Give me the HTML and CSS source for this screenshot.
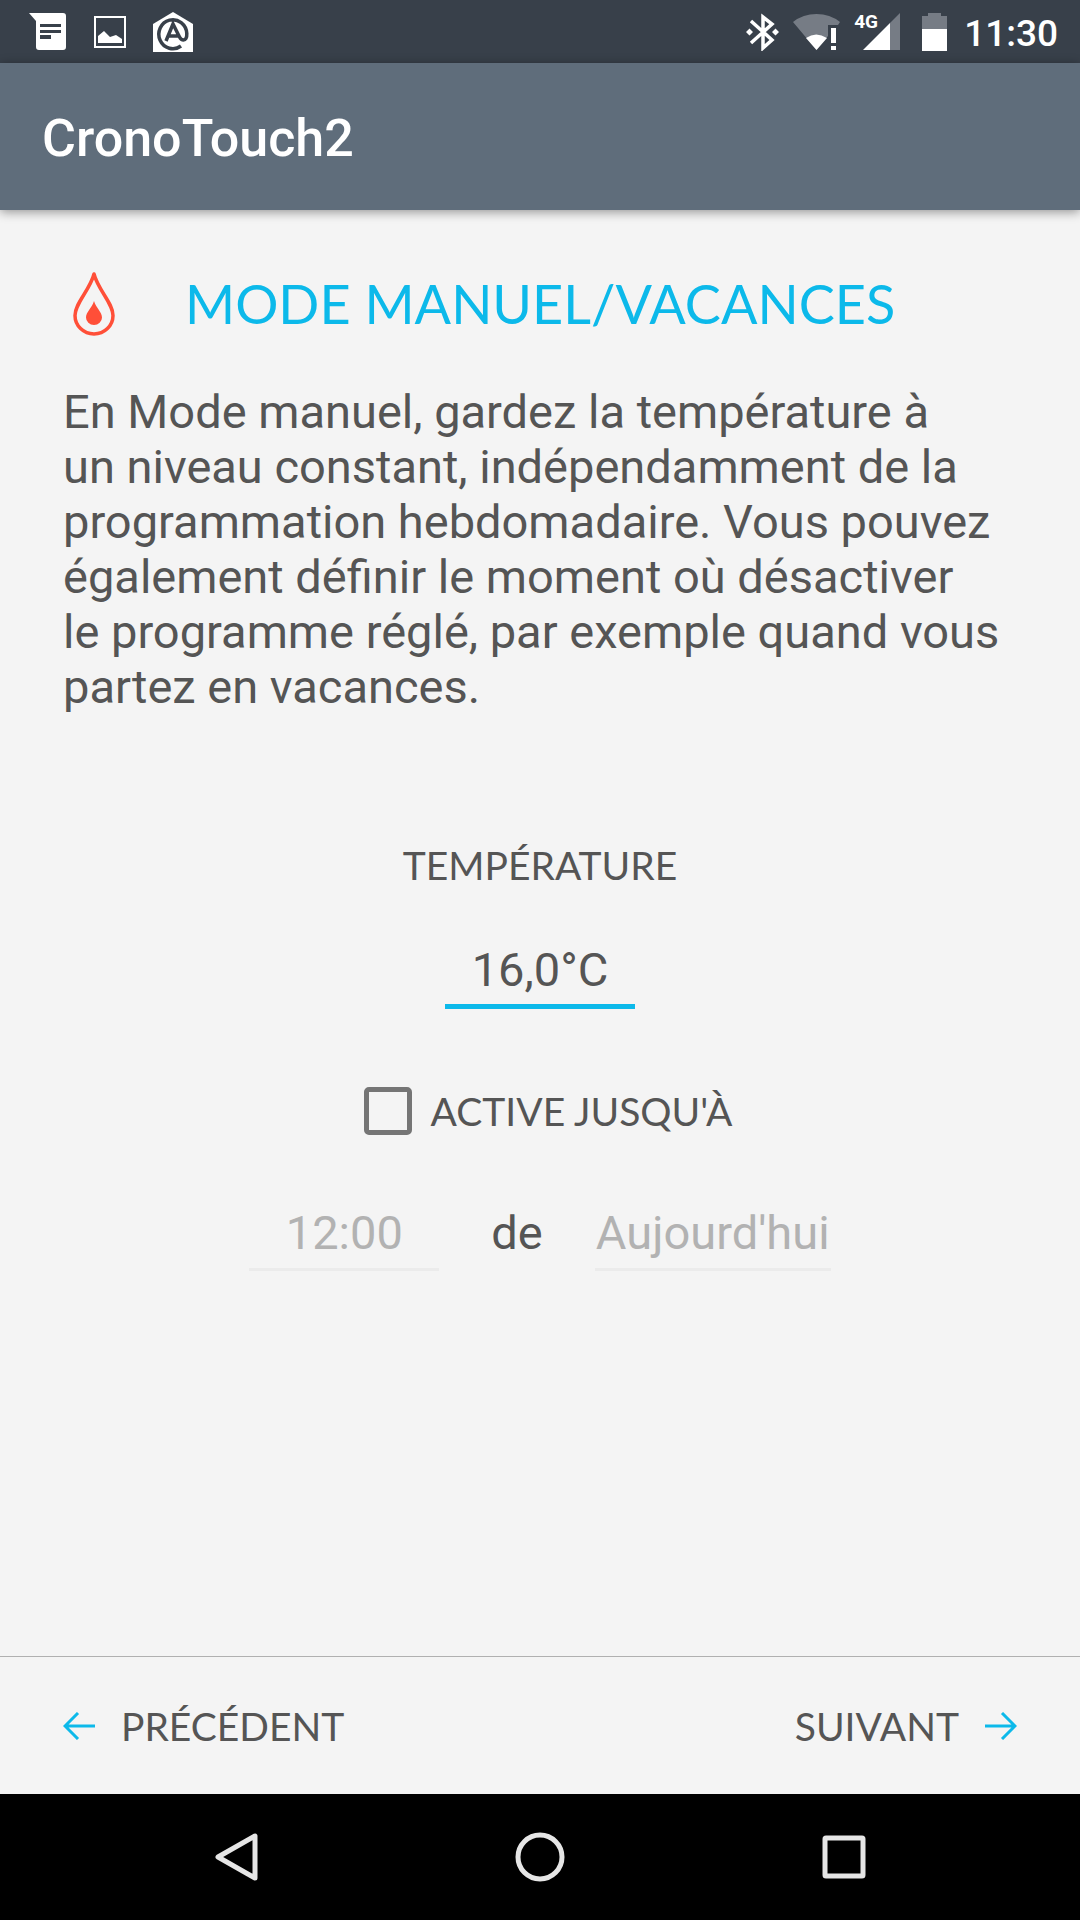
FILE: index.html
```html
<!DOCTYPE html>
<html lang="fr">
<head>
    <meta charset="UTF-8">
    <meta name="viewport" content="width=device-width, initial-scale=1.0">
    <title>CronoTouch2</title>
    <link rel="stylesheet" href="styles.css">
</head>
<body>
    <div class="status-bar">
        <div class="status-icons">
            <svg width="38" height="40" viewBox="0 0 38 40">
                <path fill="#fff" d="M0 1h34q3 0 3 3v31q0 3-3 3H10q-3 0-3-3V9z"/>
                <path fill="#38404a" d="M11 12h21v3H11zM11 18h21v3H11zM11 23h11v4H11z"/>
            </svg>
            <svg width="32" height="32" viewBox="0 0 32 32">
                <rect x="1" y="1" width="30" height="30" fill="none" stroke="#fff" stroke-width="2"/>
                <path fill="#fff" d="M4 27v-7l6-5 6 6 6-2 6 4v4z"/>
            </svg>
            <svg width="40" height="40" viewBox="0 0 40 40">
                <path fill="#fff" d="M0 12 20 0l20 12v28H0z"/>
                <path fill="none" stroke="#38404a" stroke-width="3.5" d="M28 34A14 14.500 0 1 1 33.800 21.500C34 26 32.500 28 30.500 28S27.500 27 26.500 25L20 12l-7 17M16 24h10"/>
            </svg>
        </div>
        <div class="status-icons status-right">
            <svg width="34" height="38" viewBox="0 0 34 38">
                <path fill="none" stroke="#fff" stroke-width="3.500" d="M5 8l21 19-9 8V4l9 7L5 30"/>
                <path fill="#fff" d="M3.500 15.500 7 19l-3.500 3.500L0 19zM29.500 15.500 33 19l-3.500 3.500L26 19z"/>
            </svg>
            <svg width="48" height="38" viewBox="0 0 48 38">
                <path fill="#767c85" d="M23.500 37 0 9Q10 1 23.500 1T47 9l-2 3H35v11z"/>
                <path fill="#fff" d="M23.500 37 13 25q10-7 21 0z"/>
                <path fill="#fff" d="M38 15h5v15h-5zM38 33h5v4h-5z"/>
            </svg>
            <div class="signal">
                <span class="signal-type">4G</span>
                <svg width="37" height="37" viewBox="0 0 37 37">
                    <path fill="#767c85" d="M37 0v37H27V10z"/>
                    <path fill="#fff" d="M27 10v27H0z"/>
                </svg>
            </div>
            <svg width="25" height="38" viewBox="0 0 25 38">
                <path fill="#767c85" d="M6 0h13v3h6v14H0V3h6z"/>
                <path fill="#fff" d="M0 16h25v22H0z"/>
            </svg>
            <span class="time">11:30</span>
        </div>
    </div>

    <header class="app-bar">
        <h1>CronoTouch2</h1>
    </header>

    <main class="content">
        <div class="title">
            <svg width="42" height="64" viewBox="0 0 42 64">
                <path fill="none" stroke="#ff4f38" stroke-width="3.500" stroke-linejoin="round" d="M21 2C17 18 2 31 2 43.500a19 18.500 0 0 0 38 0C40 31 25 18 21 2z"/>
                <path fill="#ff4f38" d="M21 29c-2 7-8 11-8 16.500a8 7.500 0 0 0 16 0C29 40 23 36 21 29z"/>
            </svg>
            <h2>MODE MANUEL/VACANCES</h2>
        </div>

        <p class="description">
            En Mode manuel, gardez la température à<br>
            un niveau constant, indépendamment de la<br>
            programmation hebdomadaire. Vous pouvez<br>
            également définir le moment où désactiver<br>
            le programme réglé, par exemple quand vous<br>
            partez en vacances.
        </p>

        <form class="settings">
            <label class="label" for="temperature">TEMPÉRATURE</label>
            <input class="field field-active" type="text" id="temperature" value="16,0°C">

            <div class="check-row">
                <input type="checkbox" id="until">
                <label class="label" for="until">ACTIVE JUSQU'À</label>
            </div>

            <div class="until-row">
                <input class="field" type="text" id="hour" value="12:00" aria-label="Heure" disabled>
                <label for="day">de</label>
                <input class="field field-day" type="text" id="day" value="Aujourd'hui" disabled>
            </div>
        </form>
    </main>

    <footer class="steps">
        <button type="button" class="label">
            <svg width="32" height="28" viewBox="0 0 32 28">
                <path d="M32 14H2M15 1 2 14l13 13"/>
            </svg>
            PRÉCÉDENT
        </button>
        <button type="button" class="label">
            SUIVANT
            <svg width="32" height="28" viewBox="0 0 32 28">
                <path d="M0 14h30M17 1l13 13-13 13"/>
            </svg>
        </button>
    </footer>

    <nav class="nav-bar">
        <button type="button" aria-label="Retour">
            <svg width="50" height="50" viewBox="0 0 50 50">
                <path d="M44 4v42L7 25z"/>
            </svg>
        </button>
        <button type="button" aria-label="Accueil">
            <svg width="50" height="50" viewBox="0 0 50 50">
                <circle cx="25" cy="25" r="22"/>
            </svg>
        </button>
        <button type="button" aria-label="Applications">
            <svg width="50" height="50" viewBox="0 0 50 50">
                <rect x="6" y="6" width="38" height="38" rx="1"/>
            </svg>
        </button>
    </nav>
</body>
</html>
```
FILE: styles.css
```css
* {
    box-sizing: border-box;
}
body {
    margin: 0;
    min-height: 100vh;
    display: flex;
    flex-direction: column;
    background: #f4f4f4;
    color: #555;
    font-family: Roboto, sans-serif;
    font-size: 47px;
    line-height: 55px;
}
svg {
    display: block;
    flex-shrink: 0;
}
h1, h2, p {
    margin: 0;
}
button {
    padding: 0;
    border: 0;
    background: none;
    color: inherit;
    font: inherit;
}

/* Status bar */
.status-bar {
    display: flex;
    justify-content: space-between;
    align-items: center;
    height: 63px;
    padding: 0 22px 0 29px;
    background: #38404a;
    color: #fff;
}
.status-icons {
    display: flex;
    align-items: center;
    gap: 27px;
}
.status-right {
    gap: 13px;
}
.signal {
    position: relative;
    padding-left: 9px;
    margin-right: 9px;
}
.signal-type {
    position: absolute;
    top: 0;
    left: 0;
    font-size: 19px;
    line-height: 18px;
    font-weight: 700;
}
.time {
    margin-left: 4px;
    padding-top: 4px;
    font-size: 37px;
    font-weight: 500;
}

/* App bar */
.app-bar {
    display: flex;
    align-items: center;
    height: 147px;
    padding: 4px 42px 0;
    background: #5f6d7b;
    box-shadow: 0 2px 10px rgba(0, 0, 0, 0.4);
    color: #fff;
}
.app-bar h1 {
    font-size: 52px;
    font-weight: 500;
}

/* Content */
.content {
    flex: 1;
    padding: 62px 63px 0;
}
.title {
    display: flex;
    align-items: center;
    gap: 70px;
    padding-left: 10px;
}
.title h2 {
    color: #0cb9ea;
    font-family: Lato, sans-serif;
    font-size: 54px;
    font-weight: 400;
    line-height: 64px;
}
.description {
    margin-top: 48px;
}
.label {
    font-family: Lato, sans-serif;
    font-size: 39px;
    line-height: 48px;
}
.settings {
    display: flex;
    flex-direction: column;
    align-items: center;
    margin-top: 127px;
}
.field {
    width: 190px;
    height: 75px;
    padding: 0;
    border: 0;
    border-bottom: 3px solid #ebebeb;
    border-radius: 0;
    outline: 0;
    background: none;
    color: #555;
    font: inherit;
    text-align: center;
}
.field:disabled {
    color: #b2b2b2;
}
.field-active {
    margin-top: 45px;
    border-bottom: 5px solid #0cb9ea;
}
.field-day {
    width: 236px;
}
.check-row {
    display: flex;
    align-items: center;
    gap: 19px;
    margin-top: 78px;
    padding-left: 16px;
}
.check-row input {
    appearance: none;
    width: 48px;
    height: 48px;
    margin: 0;
    border: 5px solid #757575;
    border-radius: 5px;
}
.until-row {
    display: flex;
    align-items: baseline;
    gap: 52px;
    margin-top: 61px;
}

/* Previous / next */
.steps {
    display: flex;
    justify-content: space-between;
    align-items: center;
    height: 138px;
    padding: 0 63px;
    border-top: 1px solid #b0b0b0;
}
.steps button {
    display: flex;
    align-items: center;
    gap: 26px;
}
.steps path {
    fill: none;
    stroke: #0cb9ea;
    stroke-width: 3;
}

/* Navigation bar */
.nav-bar {
    display: flex;
    justify-content: center;
    align-items: center;
    gap: 254px;
    height: 126px;
    background: #000;
}
.nav-bar svg {
    fill: none;
    stroke: #e6e6e6;
    stroke-width: 5;
    stroke-linejoin: round;
}
```
